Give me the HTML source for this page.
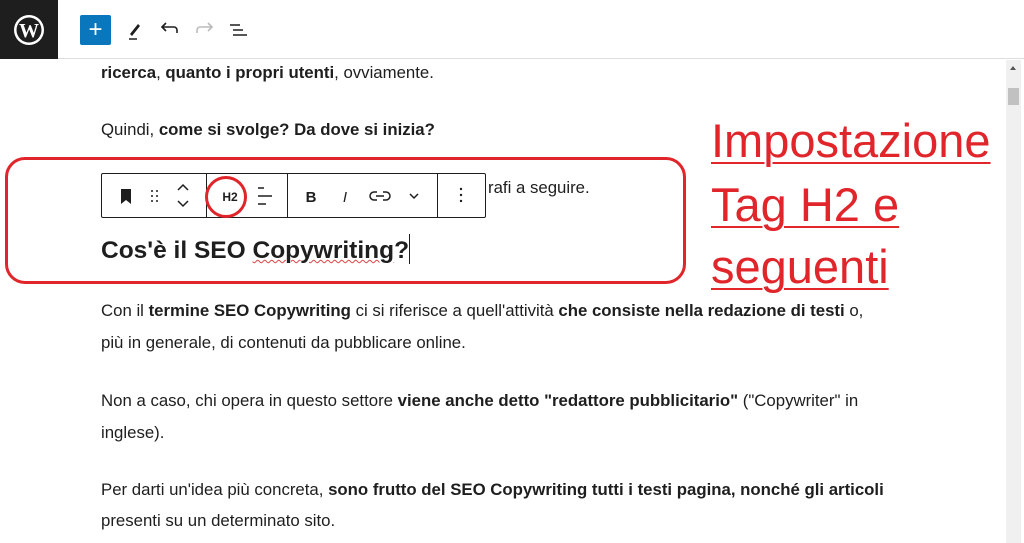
<!DOCTYPE html>
<html><head><meta charset="utf-8"><style>
*{margin:0;padding:0;box-sizing:border-box}
body{width:1024px;height:543px;overflow:hidden;background:#fff;font-family:"Liberation Sans",sans-serif;color:#1e1e1e;position:relative}
.top{position:absolute;left:0;top:0;width:1024px;height:59px;border-bottom:1px solid #ddd;background:#fff}
.logo{position:absolute;left:0;top:0;width:58px;height:59px;background:#1e1e1e}
.p{position:absolute;left:101px;font-size:16.8px;white-space:nowrap}
b{font-weight:bold}
.ann{position:absolute;left:711px;font-size:47px;color:#e0252b;text-decoration:underline;text-decoration-thickness:2px;text-underline-offset:5px;white-space:nowrap}
.sb{position:absolute;left:1006px;top:60px;width:15px;height:483px;background:#f0f0f0}
</style></head><body>
<div class="top">
<div class="logo"><svg width="58" height="59" viewBox="0 0 58 59"><circle cx="29" cy="30" r="15" fill="#fff"/><circle cx="29" cy="30" r="12.5" fill="#1e1e1e"/><text x="29" y="37" text-anchor="middle" font-family="Liberation Serif" font-weight="bold" font-size="20" fill="#fff">W</text></svg></div>
<div style="position:absolute;left:80px;top:15px;width:31px;height:30px;background:#0a77bd;border-radius:2px;color:#fff;font-size:24px;text-align:center;line-height:29px">+</div>
<svg style="position:absolute;left:125px;top:18px" width="135" height="24" viewBox="0 0 135 24">
<path d="M5 16 L13 6 L15 8 L7 18 Z" fill="#1e1e1e"/><path d="M4 21h8" stroke="#1e1e1e" stroke-width="1.5"/>
<path d="M52 15 v-3 a3 3 0 0 0 -3 -3 h-11 M41 5 l-4 4 4 4" stroke="#1e1e1e" stroke-width="1.6" fill="none"/>
<path d="M72 15 v-3 a3 3 0 0 1 3 -3 h11 M83 5 l4 4 -4 4" stroke="#bbb" stroke-width="1.6" fill="none"/>
<path d="M105 7h10 M108 12h10 M108 17h14" stroke="#1e1e1e" stroke-width="1.6"/>
</svg>
</div>
<div class="p" style="top:63px"><b>ricerca</b>, <b>quanto i propri utenti</b>, ovviamente.</div>
<div class="p" style="top:120px">Quindi, <b>come si svolge? Da dove si inizia?</b></div>
<div class="p" style="top:178px;left:488px">rafi a seguire.</div>
<div style="position:absolute;left:101px;top:173px;width:385px;height:45px;border:1px solid #1e1e1e;border-radius:2px;background:#fff">
<div style="position:absolute;left:104px;top:0;width:1px;height:43px;background:#1e1e1e"></div>
<div style="position:absolute;left:185px;top:0;width:1px;height:43px;background:#1e1e1e"></div>
<div style="position:absolute;left:335px;top:0;width:1px;height:43px;background:#1e1e1e"></div>
<svg width="385" height="45" viewBox="0 0 385 45" style="position:absolute;left:0;top:0">
<path d="M19 15h10v15l-5-4-5 4z" fill="#1e1e1e"/>
<g fill="#1e1e1e"><circle cx="50" cy="17" r="1"/><circle cx="55" cy="17" r="1"/><circle cx="50" cy="22" r="1"/><circle cx="55" cy="22" r="1"/><circle cx="50" cy="27" r="1"/><circle cx="55" cy="27" r="1"/></g>
<path d="M76 16l5-5 5 5M76 27l5 5 5-5" stroke="#1e1e1e" stroke-width="1.5" fill="none"/>
<text x="128" y="27" text-anchor="middle" font-size="12" font-weight="bold" fill="#1e1e1e">H2</text>
<path d="M156 14h6M156 22h14M156 30h8" stroke="#1e1e1e" stroke-width="1.5"/>
<text x="209" y="28" text-anchor="middle" font-size="15" font-weight="bold" fill="#1e1e1e">B</text>
<text x="243" y="28" text-anchor="middle" font-size="15" font-style="italic" fill="#1e1e1e">I</text>
<path d="M275 18h-3a4 4 0 0 0 0 8h3M281 18h3a4 4 0 0 1 0 8h-3M274 22h8" stroke="#1e1e1e" stroke-width="1.5" fill="none"/>
<path d="M308 20l4 4 4-4" stroke="#1e1e1e" stroke-width="1.5" fill="none"/>
<g fill="#1e1e1e"><circle cx="359" cy="15" r="1.2"/><circle cx="359" cy="21" r="1.2"/><circle cx="359" cy="27" r="1.2"/></g>
</svg></div>
<div class="p" style="top:234px;font-size:24.5px;font-weight:bold">Cos'è il SEO <span style="text-decoration:underline wavy #d44;text-decoration-thickness:1px">Copywriting</span>?<span style="display:inline-block;width:1px;height:30px;background:#1e1e1e;vertical-align:-6px"></span></div>
<div style="position:absolute;left:5px;top:157px;width:681px;height:127px;border:3px solid #e0252b;border-radius:20px"></div>
<div style="position:absolute;left:205px;top:176px;width:42px;height:42px;border:3px solid #e0252b;border-radius:50%"></div>
<div class="ann" style="top:113px">Impostazione</div>
<div class="ann" style="top:177px">Tag H2 e</div>
<div class="ann" style="top:239px">seguenti</div>
<div class="p" style="top:301px">Con il <b>termine SEO Copywriting</b> ci si riferisce a quell'attività <b>che consiste nella redazione di testi</b> o,</div>
<div class="p" style="top:333px">più in generale, di contenuti da pubblicare online.</div>
<div class="p" style="top:391px">Non a caso, chi opera in questo settore <b>viene anche detto "redattore pubblicitario"</b> ("Copywriter" in</div>
<div class="p" style="top:423px">inglese).</div>
<div class="p" style="top:480px">Per darti un'idea più concreta, <b>sono frutto del SEO Copywriting tutti i testi pagina, nonché gli articoli</b></div>
<div class="p" style="top:511px">presenti su un determinato sito.</div>
<div class="sb"><div style="position:absolute;left:4px;top:6px;border:3px solid transparent;border-bottom:4px solid #555;border-top:0"></div><div style="position:absolute;left:2px;top:28px;width:11px;height:17px;background:#c1c1c1"></div></div>
</body></html>
